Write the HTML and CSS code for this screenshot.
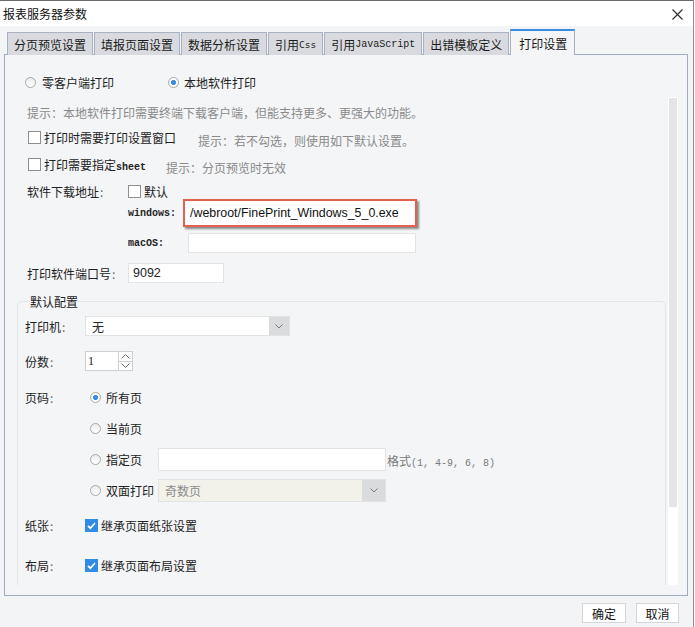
FILE: index.html
```html
<!DOCTYPE html>
<html lang="zh-CN">
<head>
<meta charset="utf-8">
<title>报表服务器参数</title>
<link rel="stylesheet" href="styles.css">
</head>
<body>
<div class="window">
  <div class="titlebar">
    <span class="title">报表服务器参数</span>
    <svg class="close" width="11" height="11" viewBox="0 0 11 11"><path d="M0.5 0.5L10.5 10.5M10.5 0.5L0.5 10.5" stroke="#2a2a2a" stroke-width="1.1" fill="none"/></svg>
  </div>
  <div class="tabs">
    <div class="tab">分页预览设置</div>
    <div class="tab">填报页面设置</div>
    <div class="tab">数据分析设置</div>
    <div class="tab">引用<span class="mono-s">Css</span></div>
    <div class="tab">引用<span class="mono">JavaScript</span></div>
    <div class="tab">出错模板定义</div>
    <div class="tab active">打印设置</div>
  </div>
  <div class="panel">
    <div class="mode-row">
      <label class="radio-item mode-a"><span class="radio"></span>零客户端打印</label>
      <label class="radio-item mode-b"><span class="radio on"></span>本地软件打印</label>
    </div>
    <div class="scroll">
      <div class="content">
        <div class="row hint-row"><span class="hint">提示：本地软件打印需要终端下载客户端，但能支持更多、更强大的功能。</span></div>
        <div class="row cb-row1"><span class="check"></span><span class="cb-text">打印时需要打印设置窗口</span><span class="hint hint-a">提示：若不勾选，则使用如下默认设置。</span></div>
        <div class="row cb-row2"><span class="check"></span><span class="cb-text">打印需要指定<span class="mono b">sheet</span></span><span class="hint hint-b">提示：分页预览时无效</span></div>
        <div class="row dl-row"><span class="label w101">软件下载地址<span class="colon">:</span></span><span class="check"></span><span class="cb-text">默认</span></div>
        <div class="row win-row"><span class="oslabel win-label mono b">windows:</span><div class="path-box">/webroot/FinePrint_Windows_5_0.exe</div></div>
        <div class="row mac-row"><span class="oslabel mac-label mono b">macOS:</span><div class="field mac-field"></div></div>
        <div class="row port-row"><span class="label w101">打印软件端口号<span class="colon">:</span></span><div class="field port-field">9092</div></div>
        <fieldset class="group">
          <legend>默认配置</legend>
          <div class="grow printer-row"><span class="glabel">打印机<span class="colon">:</span></span><div class="select printer-select"><span class="sel-text">无</span><span class="sel-arrow"><svg width="8" height="5" viewBox="0 0 8 5"><path d="M0.5 0.5L4 4L7.5 0.5" stroke="#7a7a7a" fill="none"/></svg></span></div></div>
          <div class="grow copies-row"><span class="glabel">份数<span class="colon">:</span></span><div class="spinner"><span class="spin-val">1</span><span class="spin-btns"><span class="spin-btn"><svg width="9" height="5" viewBox="0 0 9 5"><path d="M0.5 4.5L4.5 0.5L8.5 4.5" stroke="#6a6a6a" fill="none"/></svg></span><span class="spin-btn"><svg width="9" height="5" viewBox="0 0 9 5"><path d="M0.5 0.5L4.5 4.5L8.5 0.5" stroke="#6a6a6a" fill="none"/></svg></span></span></div></div>
          <div class="grow page-row r1"><span class="glabel">页码<span class="colon">:</span></span><label class="pradio"><span class="radio on"></span>所有页</label></div>
          <div class="grow page-row r2"><span class="glabel"></span><label class="pradio"><span class="radio"></span>当前页</label></div>
          <div class="grow page-row r3"><span class="glabel"></span><label class="pradio"><span class="radio"></span>指定页</label><div class="field pages-field"></div><span class="fmt">格式<span class="mono">(1, 4-9, 6, 8)</span></span></div>
          <div class="grow page-row r4"><span class="glabel"></span><label class="pradio"><span class="radio"></span>双面打印</label><div class="select duplex-select"><span class="sel-text">奇数页</span><span class="sel-arrow"><svg width="8" height="5" viewBox="0 0 8 5"><path d="M0.5 0.5L4 4L7.5 0.5" stroke="#7a7a7a" fill="none"/></svg></span></div></div>
          <div class="grow paper-row"><span class="glabel">纸张<span class="colon">:</span></span><span class="check on"><svg width="11" height="11" viewBox="0 0 11 11"><path d="M2 5.8L4.4 8.2L9 3" stroke="#fff" stroke-width="1.7" fill="none"/></svg></span><span class="cb-text">继承页面纸张设置</span></div>
          <div class="grow layout-row"><span class="glabel">布局<span class="colon">:</span></span><span class="check on"><svg width="11" height="11" viewBox="0 0 11 11"><path d="M2 5.8L4.4 8.2L9 3" stroke="#fff" stroke-width="1.7" fill="none"/></svg></span><span class="cb-text">继承页面布局设置</span></div>
        </fieldset>
      </div>
      <div class="scrollbar"><div class="thumb"></div></div>
    </div>
  </div>
  <div class="buttons">
    <button class="btn ok">确定</button>
    <button class="btn cancel">取消</button>
  </div>
</div>
</body>
</html>
```

FILE: styles.css
```css
* { box-sizing: border-box; }
html, body { margin: 0; padding: 0; }
body {
  width: 695px;
  height: 627px;
  overflow: hidden;
  background: #ffffff;
  font-family: "Noto Sans CJK SC", "Noto Sans", sans-serif;
  font-size: 12px;
  color: #222;
}
.window {
  width: 694px;
  height: 627px;
  background: #f3f4f6;
  border-right: 1px solid #8d8d8d;
  display: flex;
  flex-direction: column;
}
.titlebar {
  height: 26px;
  flex: none;
  background: #ffffff;
  border-top: 1px solid #6b6b6b;
  display: flex;
  align-items: center;
  justify-content: space-between;
  padding: 0 10px 0 3px;
}
.title { font-size: 12px; color: #111; line-height: 1; }
.close { display: block; margin-top: 1px; }

.tabs {
  display: flex;
  align-items: flex-end;
  gap: 1px;
  height: 29px;
  padding-left: 7px;
  position: relative;
  z-index: 1;
  margin-bottom: -1px;
}
.tab {
  height: 23px;
  padding: 0 6px;
  border: 1px solid #a9b2c2;
  border-bottom: none;
  background: #d9dadf;
  display: flex;
  align-items: center;
  color: #1a1a1a;
  white-space: nowrap;
}
.tab.active {
  height: 26px;
  background: #f4f5f7;
  border-top: 2px solid #3a8ee2;
  padding: 0 7px 0 8px;
}
.mono { font-family: "Liberation Mono", monospace; font-size: 10px; }
.mono-s { font-family: "DejaVu Sans Mono", monospace; font-size: 9.5px; }
.b { font-weight: bold; }

.panel {
  margin-left: 4px;
  width: 684px;
  height: 542px;
  flex: none;
  border: 1px solid #9eabc2;
  background: #f4f5f7;
  display: flex;
  flex-direction: column;
}
.mode-row {
  height: 42px;
  flex: none;
  display: flex;
  align-items: flex-start;
  padding: 17px 0 0 20px;
}
.radio-item { display: flex; align-items: center; height: 20px; }
.mode-a { width: 143px; }
.mode-a .radio { margin-right: 6px; }
.mode-b .radio { margin-right: 5px; }
.radio {
  display: inline-block;
  width: 11px;
  height: 11px;
  border-radius: 50%;
  border: 1px solid #a8a8a8;
  background: linear-gradient(#ececec, #ffffff);
  flex: none;
}
.radio.on {
  background: radial-gradient(circle at 50% 50%, #3b8ee8 0, #3b8ee8 2.2px, #ffffff 2.9px);
}
.check {
  display: inline-flex;
  align-items: center;
  justify-content: center;
  width: 13px;
  height: 13px;
  border: 1px solid #8e8e8e;
  background: #fff;
  flex: none;
}
.check.on { background: #2f8be6; border-color: #2f8be6; }

.scroll {
  height: 488px;
  flex: none;
  display: flex;
  overflow: hidden;
  padding-right: 9px;
}
.content {
  flex: 1;
  padding: 5px 2px 0 12px;
  overflow: hidden;
}
.scrollbar {
  width: 10px;
  flex: none;
  background: #ffffff;
  padding: 1px 1px 0 1px;
}
.thumb { height: 409px; background: #e5e5e5; border-radius: 1px; }

.row { display: flex; align-items: center; margin-left: 10px; }
.hint { color: #8a8a8a; }
.hint-row { height: 20px; }
.cb-row1 { height: 20px; margin-top: 5px; }
.cb-row2 { height: 20px; margin-top: 7px; }
.cb-row1 .check, .cb-row2 .check { margin-left: 1px; }
.cb-text { margin-left: 3px; white-space: nowrap; }
.hint-a { margin-left: 22px; margin-top: 6px; }
.hint-b { margin-left: 20px; margin-top: 7px; }
.label { white-space: nowrap; }
.w101 { width: 101px; flex: none; }
.colon { color: #666; margin-left: 1px; }
.dl-row { height: 18px; margin-top: 8px; }
.win-row { height: 28px; margin-top: -1px; }
.oslabel { margin-left: 101px; flex: none; color: #222; }
.win-label { width: 55px; }
.mac-label { width: 60px; }
.path-box {
  width: 234px;
  height: 28px;
  border: 2px solid #e3604f;
  background: #ffffff;
  box-shadow: 2px 2px 2px rgba(0, 0, 0, 0.45);
  display: flex;
  align-items: center;
  padding-left: 5px;
  font-family: "Liberation Sans", sans-serif;
  font-size: 12.4px;
  color: #111;
}
.field {
  background: #ffffff;
  border: 1px solid #e4e4e4;
  height: 20px;
  display: flex;
  align-items: center;
}
.mac-row { height: 20px; margin-top: 6px; }
.mac-field { width: 228px; }
.port-row { height: 20px; margin-top: 10px; }
.port-field { width: 96px; padding-left: 4px; font-family: "Liberation Sans", sans-serif; font-size: 12.5px; }

.group {
  margin: 10px 0 0 0;
  padding: 0 0 40px 7px;
  border: 1px solid #e2e4e8;
  border-radius: 5px;
  min-width: 0;
}
.group legend {
  padding: 0;
  margin-left: 5px;
  color: #222;
}
.grow { display: flex; align-items: center; }
.glabel { width: 60px; flex: none; white-space: nowrap; }
.printer-row { height: 20px; margin-top: 6px; }
.select {
  display: flex;
  align-items: stretch;
  background: #ffffff;
  border: 1px solid #e2e2e2;
}
.sel-text { flex: 1; display: flex; align-items: center; padding-left: 6px; }
.sel-arrow {
  width: 20px;
  flex: none;
  background: #dadbdd;
  display: flex;
  align-items: center;
  justify-content: center;
}
.printer-select { width: 205px; height: 20px; }
.copies-row { height: 20px; margin-top: 15px; }
.spinner {
  width: 48px;
  height: 20px;
  display: flex;
  border: 1px solid #d0d0d0;
  background: #ffffff;
}
.spin-val {
  flex: 1;
  padding-left: 2px;
  display: flex;
  align-items: center;
  font-family: "Liberation Serif", serif;
  font-size: 12px;
}
.spin-btns {
  width: 14px;
  flex: none;
  display: flex;
  flex-direction: column;
  border-left: 1px solid #d0d0d0;
}
.spin-btn {
  flex: 1;
  display: flex;
  align-items: center;
  justify-content: center;
}
.spin-btn + .spin-btn { border-top: 1px solid #d0d0d0; }
.page-row { height: 23px; }
.r1 { margin-top: 15px; }
.r2 { margin-top: 8px; }
.r3 { margin-top: 8px; }
.r4 { margin-top: 8px; }
.pradio { display: flex; align-items: center; width: 73px; flex: none; padding-left: 5px; white-space: nowrap; }
.pradio .radio { margin-right: 5px; }
.pages-field { width: 228px; height: 23px; }
.fmt { color: #7a7a7a; margin-left: 1px; margin-top: 1px; white-space: nowrap; }
.duplex-select { width: 228px; height: 23px; background: #f2f1ea; }
.duplex-select .sel-text { color: #8a8a8a; }
.duplex-select .sel-arrow { width: 23px; }
.paper-row { height: 20px; margin-top: 13px; }
.layout-row { height: 20px; margin-top: 20px; }
.paper-row .cb-text, .layout-row .cb-text { margin-left: 3px; }

.buttons {
  display: flex;
  justify-content: flex-end;
  gap: 10px;
  padding: 7px 14px 0 0;
}
.btn {
  height: 20px;
  padding: 0;
  border: 1px solid #d6d6d6;
  background: #ffffff;
  font-family: "Noto Sans CJK SC", sans-serif;
  font-size: 12px;
  color: #111;
  display: flex;
  align-items: center;
  justify-content: center;
}
.ok { width: 44px; }
.cancel { width: 43px; }
```
